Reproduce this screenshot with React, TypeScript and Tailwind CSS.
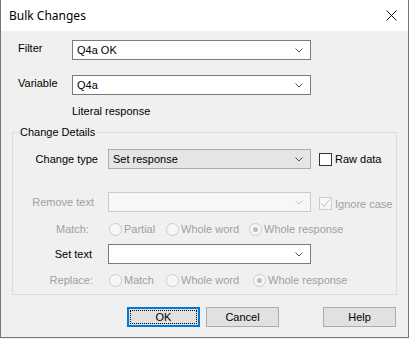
import React from 'react'

const ui = { fontFamily: '"Liberation Sans", Arial, sans-serif' }

function Chevron({ disabled }: { disabled?: boolean }) {
  return (
    <svg width="8" height="5" viewBox="0 0 8 5" className="mr-[7px] shrink-0">
      <polyline points="0.5,0.5 4,4 7.5,0.5" fill="none" stroke={disabled ? '#c8c8c8' : '#505050'} strokeWidth="1" />
    </svg>
  )
}

function Combo({ value, variant = 'edit', width = 'w-[203px]' }: { value?: string; variant?: 'edit' | 'list' | 'disabled'; width?: string }) {
  const box =
    variant === 'list'
      ? 'bg-[#e5e5e5] border-[#adadad]'
      : variant === 'disabled'
      ? 'bg-[#f7f7f7] border-[#cccccc]'
      : 'bg-white border-[#7a7a7a]'
  return (
    <div className={`${width} h-[20px] border ${box} flex items-center justify-between shrink-0`}>
      <span className="pl-[4px] text-[11px] leading-[16px] text-black">{value}</span>
      <Chevron disabled={variant === 'disabled'} />
    </div>
  )
}

function Radio({ label, checked, width }: { label: string; checked?: boolean; width: string }) {
  return (
    <div className={`${width} flex items-center shrink-0`}>
      <div className="w-[13px] h-[13px] rounded-full border border-[#cccccc] bg-[#f7f7f7] flex items-center justify-center">
        {checked && <div className="w-[5px] h-[5px] rounded-full bg-[#bdbdbd]" />}
      </div>
      <span className="ml-[2px] text-[11px] leading-[16px] text-[#a0a0a0]">{label}</span>
    </div>
  )
}

function Button({ label, focused }: { label: string; focused?: boolean }) {
  return (
    <div
      className={`w-[73px] h-[20px] bg-[#e1e1e1] flex ${
        focused ? 'border-2 border-[#0078d7] p-[1px]' : 'border border-[#adadad]'
      }`}
    >
      <div className={`flex-1 flex items-center justify-center text-[11px] leading-[14px] text-black ${focused ? 'border border-dotted border-black' : ''}`}>
        {label}
      </div>
    </div>
  )
}

export default function App() {
  return (
    <div className="w-[409px] h-[339px] bg-[#f0f0f0]" style={ui}>
      <div className="w-[409px] h-[338px] border-x border-b border-[#777777] bg-[#f0f0f0] flex flex-col">
        {/* Title bar */}
        <div className="h-[31px] bg-white flex items-center justify-between pl-[8px] pr-[11px] shrink-0">
          <span className="text-[12px] text-black" style={{ fontFamily: '"Noto Sans", sans-serif' }}>
            Bulk Changes
          </span>
          <svg width="11" height="11" viewBox="0 0 11 11">
            <path d="M0.5 0.5 L10.5 10.5 M10.5 0.5 L0.5 10.5" stroke="#111" strokeWidth="1" />
          </svg>
        </div>

        {/* Body */}
        <div className="px-[11px] pt-[9px] flex flex-col">
          <div className="flex items-start pl-[6px]">
            <span className="w-[54px] text-[11px] leading-[16px]">Filter</span>
            <Combo value="Q4a OK" width="w-[239px]" />
          </div>
          <div className="flex items-start pl-[6px] mt-[15px]">
            <span className="w-[54px] text-[11px] leading-[16px]">Variable</span>
            <Combo value="Q4a" width="w-[239px]" />
          </div>
          <div className="pl-[60px] mt-[8px] text-[11px] leading-[16px]">Literal response</div>

          {/* Change Details */}
          <fieldset className="w-[385px] mt-[5px] border border-[#dcdcdc] pb-[6px]">
            <legend className="ml-[6px] px-[1px] text-[11px] leading-[16px]">Change Details</legend>

            <div className="flex items-center mt-[9px]">
              <span className="w-[95px] pr-[10px] text-right text-[11px] leading-[16px]">Change type</span>
              <Combo value="Set response" variant="list" />
              <div className="ml-[8px] w-[13px] h-[13px] border border-[#333333] bg-white" />
              <span className="ml-[3px] text-[11px] leading-[16px]">Raw data</span>
            </div>

            <div className="flex items-center mt-[23px]">
              <span className="w-[95px] pr-[14px] text-right text-[11px] leading-[16px] text-[#a0a0a0]">Remove text</span>
              <Combo variant="disabled" />
              <div className="ml-[8px] mt-[2px] flex items-center">
                <div className="w-[13px] h-[13px] border border-[#cccccc] bg-[#f7f7f7] flex items-center justify-center">
                  <svg width="11" height="11" viewBox="0 0 11 11">
                    <polyline points="1.5,5.5 4,8.5 9.5,1.5" fill="none" stroke="#c0c0c0" strokeWidth="1" />
                  </svg>
                </div>
                <span className="ml-[3px] mt-[2px] text-[11px] leading-[16px] text-[#a0a0a0]">Ignore case</span>
              </div>
            </div>

            <div className="flex items-center mt-[9px]">
              <span className="w-[96px] pr-[20px] text-right text-[11px] leading-[16px] text-[#a0a0a0]">Match:</span>
              <Radio label="Partial" width="w-[57px]" />
              <Radio label="Whole word" width="w-[83px]" />
              <Radio label="Whole response" checked width="w-[110px]" />
            </div>

            <div className="flex items-center mt-[7px]">
              <span className="w-[95px] pr-[16px] text-right text-[11px] leading-[16px]">Set text</span>
              <Combo />
            </div>

            <div className="flex items-center mt-[8px]">
              <span className="w-[96px] pr-[16px] text-right text-[11px] leading-[16px] text-[#a0a0a0]">Replace:</span>
              <Radio label="Match" width="w-[57px]" />
              <Radio label="Whole word" width="w-[87px]" />
              <Radio label="Whole response" checked width="w-[110px]" />
            </div>
          </fieldset>

          {/* Buttons */}
          <div className="flex mt-[12px] pl-[115px]">
            <Button label="OK" focused />
            <div className="ml-[6px]">
              <Button label="Cancel" />
            </div>
            <div className="ml-[44px]">
              <Button label="Help" />
            </div>
          </div>
        </div>
      </div>
    </div>
  )
}
